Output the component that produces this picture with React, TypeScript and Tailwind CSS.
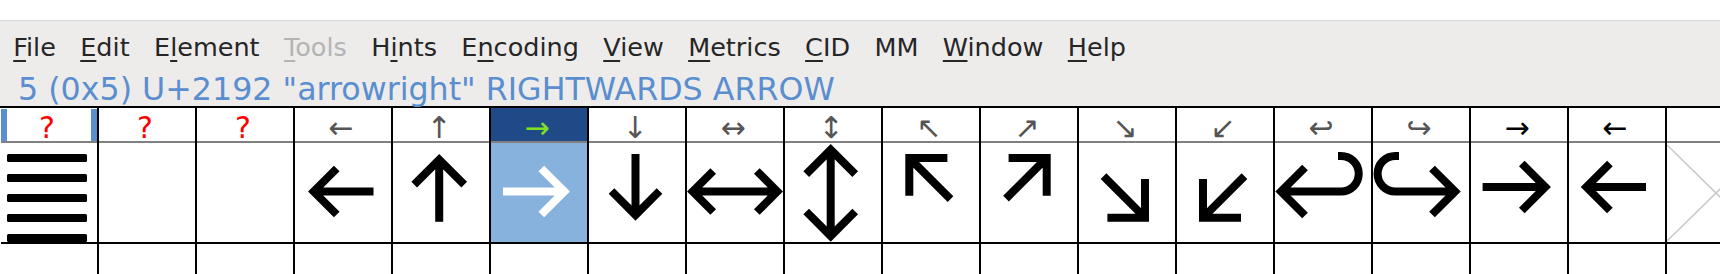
import React from "react";

type Cell = {
  label: string;
  labelColor: string;
  headerBg?: string;
  glyphBg?: string;
  glyph?: React.ReactNode;
};

const S = 8;

function Arrow({ d, color = "#000" }: { d: string; color?: string }) {
  return (
    <path
      d={d}
      fill="none"
      stroke={color}
      strokeWidth={S}
      strokeLinejoin="miter"
      strokeMiterlimit={10}
      strokeLinecap="butt"
    />
  );
}

const bars = (
  <g fill="#000">
    <rect x="6" y="11" width="80" height="8" rx="1.5" />
    <rect x="6" y="31" width="80" height="8" rx="1.5" />
    <rect x="6" y="51" width="80" height="8" rx="1.5" />
    <rect x="6" y="71" width="80" height="8" rx="1.5" />
    <rect x="6" y="91" width="80" height="8" rx="1.5" />
  </g>
);

const cells: Cell[] = [
  { label: "?", labelColor: "text-[#ff0000]", glyph: bars },
  { label: "?", labelColor: "text-[#ff0000]" },
  { label: "?", labelColor: "text-[#ff0000]" },
  {
    label: "←",
    labelColor: "text-[#555555]",
    glyph: <Arrow d="M41.7 25.5 L18.7 48.5 L41.7 71.5 M20 48.5 H78.5" />,
  },
  {
    label: "↑",
    labelColor: "text-[#555555]",
    glyph: <Arrow d="M21.2 41.7 L46.2 16.7 L71.2 41.7 M46.2 18 V78.7" />,
  },
  {
    label: "→",
    labelColor: "text-[#7fe021]",
    headerBg: "bg-[#1f4a87]",
    glyphBg: "bg-[#88b2de]",
    glyph: <Arrow color="#ffffff" d="M50.3 25.5 L73.3 48.5 L50.3 71.5 M12 48.5 H72" />,
  },
  {
    label: "↓",
    labelColor: "text-[#555555]",
    glyph: <Arrow d="M22.5 48 L46.5 72 L70.5 48 M46.5 11 V70.5" />,
  },
  {
    label: "↔",
    labelColor: "text-[#555555]",
    glyph: (
      <Arrow d="M26.2 28 L5.7 48.5 L26.2 69 M69.8 28 L90.3 48.5 L69.8 69 M7 48.5 H89" />
    ),
  },
  {
    label: "↕",
    labelColor: "text-[#555555]",
    glyph: (
      <Arrow d="M21.2 31.2 L45.7 6.7 L70.2 31.2 M21.2 68.5 L45.7 93 L70.2 68.5 M45.7 8 V91.5" />
    ),
  },
  {
    label: "↖",
    labelColor: "text-[#555555]",
    glyph: <Arrow d="M64.4 15 H26.3 V52.7 M27.5 16.2 L67.5 56.2" />,
  },
  {
    label: "↗",
    labelColor: "text-[#555555]",
    glyph: <Arrow d="M27.6 15 H65.7 V52.7 M64.5 16.2 L25 55.7" />,
  },
  {
    label: "↘",
    labelColor: "text-[#555555]",
    glyph: <Arrow d="M66 36 V74.7 H28.4 M64.8 73.5 L24.5 33.2" />,
  },
  {
    label: "↙",
    labelColor: "text-[#555555]",
    glyph: <Arrow d="M26 36 V74.7 H64 M27.2 73.5 L67.5 33.2" />,
  },
  {
    label: "↩",
    labelColor: "text-[#555555]",
    glyph: (
      <Arrow d="M30 24.5 L6 48.5 L30 72.5 M7.5 48.5 H66 A17.75 17.75 0 0 0 66 13 H63" />
    ),
  },
  {
    label: "↪",
    labelColor: "text-[#555555]",
    glyph: (
      <Arrow d="M59 25.5 L82.1 48.5 L59 71.5 M80.5 48.5 H22.35 A17.75 17.75 0 0 1 22.35 13 H26" />
    ),
  },
  {
    label: "→",
    labelColor: "text-[#000000]",
    glyph: <Arrow d="M50.8 20.5 L74.3 44 L50.8 67.5 M11.6 44 H73" />,
  },
  {
    label: "←",
    labelColor: "text-[#000000]",
    glyph: <Arrow d="M40.9 20.5 L17.4 44 L40.9 67.5 M18.7 44 H77" />,
  },
  {
    label: "",
    labelColor: "text-[#000000]",
    glyph: (
      <path d="M0 2 L98 98 M0 98 L98 2" fill="none" stroke="#c8c8c8" strokeWidth={1.5} />
    ),
  },
];

const menus: { text: string; u: number; disabled?: boolean }[] = [
  { text: "File", u: 0 },
  { text: "Edit", u: 0 },
  { text: "Element", u: 1 },
  { text: "Tools", u: 0, disabled: true },
  { text: "Hints", u: 1 },
  { text: "Encoding", u: 1 },
  { text: "View", u: 0 },
  { text: "Metrics", u: 0 },
  { text: "CID", u: 0 },
  { text: "MM", u: -1 },
  { text: "Window", u: 0 },
  { text: "Help", u: 0 },
];

function MenuItem({ text, u, disabled }: { text: string; u: number; disabled?: boolean }) {
  return (
    <span className={`px-[12.2px] ${disabled ? "text-[#b4b4b4]" : "text-[#262626]"}`}>
      {u < 0 ? (
        text
      ) : (
        <>
          {text.slice(0, u)}
          <span className="underline decoration-2 underline-offset-[4px]">{text[u]}</span>
          {text.slice(u + 1)}
        </>
      )}
    </span>
  );
}

export default function App() {
  return (
    <div className="w-[1720px] h-[274px] overflow-hidden bg-white font-['DejaVu_Sans',sans-serif]">
      <div className="h-[21px] bg-white border-b border-[#d9d9d9]" />
      <div className="bg-[#edeceb]">
        <div className="flex pt-[11px] pl-[1px] text-[25.5px] leading-[31px] whitespace-nowrap">
          {menus.map((m) => (
            <MenuItem key={m.text} {...m} />
          ))}
        </div>
        <div className="h-[43px] pt-[10px] pl-[18px] text-[31.7px] leading-[33px] text-[#5a8ecf] whitespace-pre">
          {'5 (0x5) U+2192 "arrowright" RIGHTWARDS ARROW'}
        </div>
      </div>
      <div className="border-t-2 border-black flex pl-[1px]">
        {cells.map((c, i) => (
          <div key={i} className="w-[98px] shrink-0 border-r-2 border-black flex flex-col">
            <div
              className={`relative h-[35px] border-b-2 border-[#808080] flex items-end justify-center pr-[4px] ${c.headerBg ?? "bg-white"}`}
            >
              {i === 0 && (
                <>
                  <div className="absolute left-0 top-[1px] w-[6px] h-[32px] bg-[#5a8ecf]" />
                  <div className="absolute right-0 top-[1px] w-[6px] h-[32px] bg-[#5a8ecf]" />
                </>
              )}
              <span className={`block text-[30px] leading-[26px] ${c.labelColor}`}>
                {c.label}
              </span>
            </div>
            <div className={`h-[101px] border-b-2 border-black ${c.glyphBg ?? "bg-white"}`}>
              <svg width="96" height="99" viewBox="0 0 96 99" className="block">
                {c.glyph}
              </svg>
            </div>
          </div>
        ))}
      </div>
      <div className="flex pl-[1px]">
        {cells.map((_, i) => (
          <div key={i} className="w-[98px] h-[40px] shrink-0 border-r-2 border-black bg-white" />
        ))}
      </div>
    </div>
  );
}
